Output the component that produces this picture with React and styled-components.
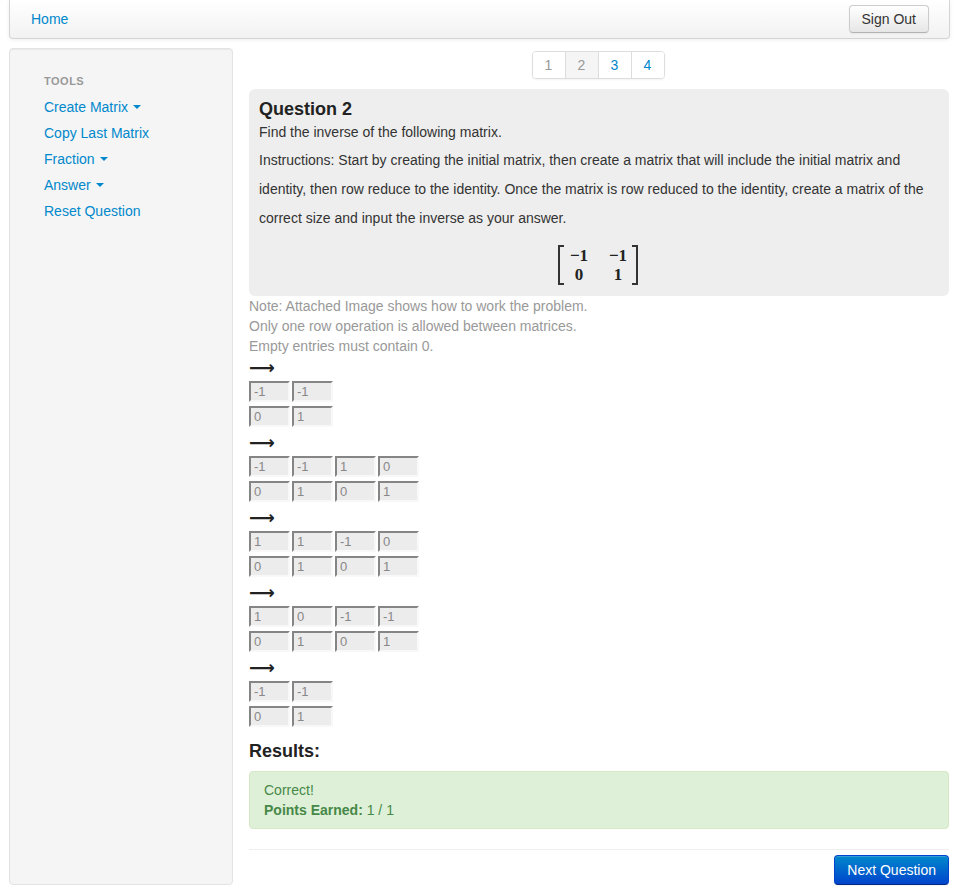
import React from "react";
import styled, { createGlobalStyle } from "styled-components";

const GlobalStyle = createGlobalStyle`
    html, body {
        margin: 0;
        padding: 0;
        background: #ffffff;
    }
    body {
        font-family: "Liberation Sans", Arial, sans-serif;
        font-size: 14px;
        line-height: 20px;
        color: #333333;
    }
`;

const Page = styled.div`
    width: 965px;
    box-sizing: border-box;
    padding: 0 16px 8px 9px;
`;

const Navbar = styled.div`
    height: 39px;
    margin-right: -1px;
    box-sizing: border-box;
    display: flex;
    align-items: center;
    justify-content: space-between;
    padding: 0 20px 0 21px;
    background: linear-gradient(#ffffff, #f2f2f2);
    border: 1px solid #d4d4d4;
    border-top: none;
    border-radius: 0 0 4px 4px;
    box-shadow: 0 1px 4px rgba(0, 0, 0, 0.065);
`;

const Link = styled.a`
    color: #0088cc;
    text-decoration: none;
    cursor: pointer;
`;

const Button = styled.button`
    font: inherit;
    font-size: 14px;
    line-height: 20px;
    border-radius: 4px;
    cursor: pointer;
    color: ${(p) => (p.primary ? "#ffffff" : "#333333")};
    padding: ${(p) => (p.primary ? "4px 12px" : "3px 12px")};
    background: ${(p) => (p.primary ? "linear-gradient(#0088cc, #0044cc)" : "linear-gradient(#ffffff, #e6e6e6)")};
    border: 1px solid ${(p) => (p.primary ? "#0044cc" : "#cccccc")};
    border-bottom-color: ${(p) => (p.primary ? "#002a80" : "#b3b3b3")};
    box-shadow: inset 0 1px 0 rgba(255, 255, 255, 0.2), 0 1px 2px rgba(0, 0, 0, 0.05);
`;

const Body = styled.div`
    display: flex;
    align-items: stretch;
    margin-top: 9px;
`;

const Sidebar = styled.div`
    width: 224px;
    flex-shrink: 0;
    box-sizing: border-box;
    padding: 22px 15px 19px 34px;
    background: #f5f5f5;
    border: 1px solid #e3e3e3;
    border-radius: 4px;
    box-shadow: inset 0 1px 1px rgba(0, 0, 0, 0.05);
`;

const NavHeader = styled.div`
    font-size: 11px;
    font-weight: bold;
    line-height: 20px;
    color: #999999;
    text-transform: uppercase;
    letter-spacing: 0.5px;
    margin-bottom: 3px;
`;

const NavItem = styled.div`
    line-height: 26px;
`;

const Caret = styled.span`
    display: inline-block;
    width: 0;
    height: 0;
    margin-left: 5px;
    vertical-align: middle;
    margin-top: -3px;
    border-top: 4px solid #0088cc;
    border-left: 4px solid transparent;
    border-right: 4px solid transparent;
`;

const Main = styled.div`
    width: 700px;
    margin-left: 16px;
    display: flex;
    flex-direction: column;
`;

const Pagination = styled.div`
    align-self: center;
    display: flex;
    margin-top: 3px;
    margin-right: 2px;
    border: 1px solid #dddddd;
    border-radius: 4px;
    box-shadow: 0 1px 2px rgba(0, 0, 0, 0.05);
    overflow: hidden;
`;

const PageItem = styled.span`
    width: 32px;
    line-height: 26px;
    text-align: center;
    color: ${(p) => (p.muted ? "#999999" : "#0088cc")};
    background: ${(p) => (p.active ? "#f5f5f5" : "#ffffff")};
    border-left: ${(p) => (p.first ? "none" : "1px solid #dddddd")};
`;

const QuestionBox = styled.div`
    margin-top: 10px;
    padding: 10px 10px 11px;
    background: #eeeeee;
    border-radius: 6px;
`;

const Title = styled.h3`
    margin: 0 0 3px;
    font-size: 18px;
    line-height: 20px;
    font-weight: bold;
    color: #222222;
`;

const Prompt = styled.p`
    margin: 0;
    font-size: 14px;
    line-height: 20px;
`;

const Instructions = styled.p`
    margin: 4px 0 0;
    font-size: 14px;
    line-height: 29px;
`;

const MathRow = styled.div`
    display: flex;
    justify-content: center;
    margin-top: 12px;
    padding-right: 2px;
`;

const Bracket = styled.span`
    width: 4px;
    border: 2px solid #333333;
    border-left-width: ${(p) => (p.right ? "0" : "2px")};
    border-right-width: ${(p) => (p.right ? "2px" : "0")};
`;

const MathGrid = styled.div`
    display: grid;
    grid-template-columns: repeat(2, 22px);
    column-gap: 17px;
    padding: 1px 3px 1px 4px;
    font-family: "Liberation Serif", "Times New Roman", serif;
    font-weight: bold;
    font-size: 17px;
    line-height: 19px;
    text-align: center;
    color: #222222;
`;

const Notes = styled.div`
    color: #999999;
    font-size: 14px;
    line-height: 20px;
`;

const Arrow = styled.div`
    font-family: "DejaVu Sans", sans-serif;
    font-size: 18px;
    font-weight: bold;
    line-height: 23px;
    height: 23px;
    margin-bottom: 2px;
    color: #222222;
`;

const MatrixRow = styled.div`
    display: flex;
    gap: 2px;
    height: 25px;
`;

const Cell = styled.input`
    width: 41px;
    height: 21px;
    box-sizing: border-box;
    padding: 0 0 0 3px;
    font-family: "Liberation Sans", Arial, sans-serif;
    font-size: 13px;
    color: #888888;
    background: #ececec;
    border-style: solid;
    border-width: 2px;
    border-color: #858585 #f8f8f8 #f8f8f8 #858585;
    outline: none;
`;

const ResultsTitle = styled.h3`
    margin: 10px 0 10px;
    font-size: 18px;
    line-height: 20px;
    font-weight: bold;
    color: #222222;
`;

const Alert = styled.div`
    padding: 8px 14px 8px 14px;
    background: #dff0d8;
    border: 1px solid #d6e9c6;
    border-radius: 4px;
    color: #468847;
`;

const Divider = styled.hr`
    margin: 20px 0 5px;
    border: 0;
    border-top: 1px solid #eeeeee;
`;

const Footer = styled.div`
    display: flex;
    justify-content: flex-end;
`;

const steps = [
    [["-1", "-1"], ["0", "1"]],
    [["-1", "-1", "1", "0"], ["0", "1", "0", "1"]],
    [["1", "1", "-1", "0"], ["0", "1", "0", "1"]],
    [["1", "0", "-1", "-1"], ["0", "1", "0", "1"]],
    [["-1", "-1"], ["0", "1"]],
];

const tools = [
    { label: "Create Matrix", menu: true },
    { label: "Copy Last Matrix" },
    { label: "Fraction", menu: true },
    { label: "Answer", menu: true },
    { label: "Reset Question" },
];

export default function App() {
    return (
        <Page>
            <GlobalStyle />
            <Navbar>
                <Link>Home</Link>
                <Button>Sign Out</Button>
            </Navbar>
            <Body>
                <Sidebar>
                    <NavHeader>Tools</NavHeader>
                    {tools.map((t) => (
                        <NavItem key={t.label}>
                            <Link>{t.label}</Link>
                            {t.menu ? <Caret /> : null}
                        </NavItem>
                    ))}
                </Sidebar>
                <Main>
                    <Pagination>
                        <PageItem first muted>1</PageItem>
                        <PageItem active muted>2</PageItem>
                        <PageItem>3</PageItem>
                        <PageItem>4</PageItem>
                    </Pagination>
                    <QuestionBox>
                        <Title>Question 2</Title>
                        <Prompt>Find the inverse of the following matrix.</Prompt>
                        <Instructions>
                            Instructions: Start by creating the initial matrix, then create a matrix that will include the initial matrix and identity, then row reduce to the identity. Once the matrix is row reduced to the identity, create a matrix of the correct size and input the inverse as your answer.
                        </Instructions>
                        <MathRow>
                            <Bracket />
                            <MathGrid>
                                <span>−1</span>
                                <span>−1</span>
                                <span>0</span>
                                <span>1</span>
                            </MathGrid>
                            <Bracket right />
                        </MathRow>
                    </QuestionBox>
                    <Notes>
                        Note: Attached Image shows how to work the problem.<br />
                        Only one row operation is allowed between matrices.<br />
                        Empty entries must contain 0.
                    </Notes>
                    {steps.map((rows, i) => (
                        <div key={i}>
                            <Arrow>⟶</Arrow>
                            {rows.map((row, r) => (
                                <MatrixRow key={r}>
                                    {row.map((v, c) => (
                                        <Cell key={c} defaultValue={v} readOnly />
                                    ))}
                                </MatrixRow>
                            ))}
                        </div>
                    ))}
                    <ResultsTitle>Results:</ResultsTitle>
                    <Alert>
                        Correct!<br />
                        <b>Points Earned:</b> 1 / 1
                    </Alert>
                    <Divider />
                    <Footer>
                        <Button primary>Next Question</Button>
                    </Footer>
                </Main>
            </Body>
        </Page>
    );
}
